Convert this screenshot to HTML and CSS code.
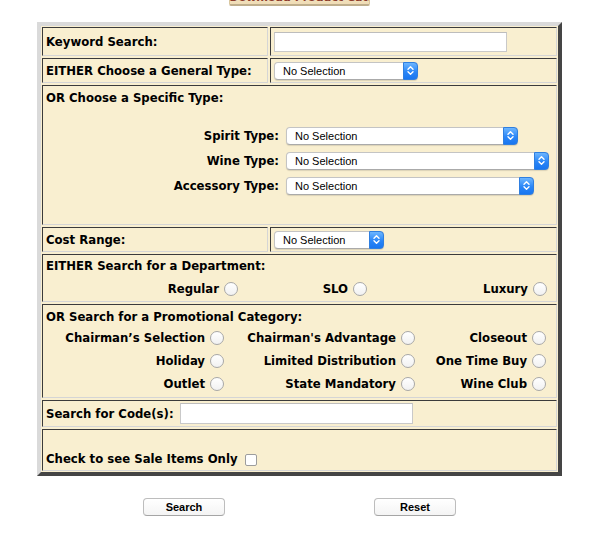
FILE: index.html
```html
<!DOCTYPE html>
<html>
<head>
<meta charset="utf-8">
<title>Product Search</title>
<link rel="stylesheet" href="styles.css">
</head>
<body>
<div class="topbar"><button class="catalog" type="button">Download Product Catalog</button></div>
<form class="search">
  <div class="grid">
    <div class="cell">Keyword Search:</div>
    <div class="cell"><input class="txt kw" type="text"></div>

    <div class="cell">EITHER Choose a General Type:</div>
    <div class="cell">
      <span class="sel w-general"><select><option>No Selection</option></select><span class="arr"><svg width="9" height="13" viewBox="0 0 9 13"><path d="M2 5.2 L4.5 2.7 L7 5.2 M2 7.8 L4.5 10.3 L7 7.8" fill="none" stroke="#fff" stroke-width="1.4" stroke-linecap="round" stroke-linejoin="round"/></svg></span></span>
    </div>

    <div class="cell span specific">
      <div class="title">OR Choose a Specific Type:</div>
      <div class="types">
        <span class="tlabel">Spirit Type:</span>
        <span class="sel w-spirit"><select><option>No Selection</option></select><span class="arr"><svg width="9" height="13" viewBox="0 0 9 13"><path d="M2 5.2 L4.5 2.7 L7 5.2 M2 7.8 L4.5 10.3 L7 7.8" fill="none" stroke="#fff" stroke-width="1.4" stroke-linecap="round" stroke-linejoin="round"/></svg></span></span>
        <span class="tlabel">Wine Type:</span>
        <span class="sel w-wine"><select><option>No Selection</option></select><span class="arr"><svg width="9" height="13" viewBox="0 0 9 13"><path d="M2 5.2 L4.5 2.7 L7 5.2 M2 7.8 L4.5 10.3 L7 7.8" fill="none" stroke="#fff" stroke-width="1.4" stroke-linecap="round" stroke-linejoin="round"/></svg></span></span>
        <span class="tlabel">Accessory Type:</span>
        <span class="sel w-accessory"><select><option>No Selection</option></select><span class="arr"><svg width="9" height="13" viewBox="0 0 9 13"><path d="M2 5.2 L4.5 2.7 L7 5.2 M2 7.8 L4.5 10.3 L7 7.8" fill="none" stroke="#fff" stroke-width="1.4" stroke-linecap="round" stroke-linejoin="round"/></svg></span></span>
      </div>
    </div>

    <div class="cell">Cost Range:</div>
    <div class="cell">
      <span class="sel w-cost"><select><option>No Selection</option></select><span class="arr"><svg width="9" height="13" viewBox="0 0 9 13"><path d="M2 5.2 L4.5 2.7 L7 5.2 M2 7.8 L4.5 10.3 L7 7.8" fill="none" stroke="#fff" stroke-width="1.4" stroke-linecap="round" stroke-linejoin="round"/></svg></span></span>
    </div>

    <div class="cell span stack dept">
      <div class="title">EITHER Search for a Department:</div>
      <div class="opts dept-opts">
        <label class="opt">Regular <input type="radio" name="dept"></label>
        <label class="opt">SLO <input type="radio" name="dept"></label>
        <label class="opt">Luxury <input type="radio" name="dept"></label>
      </div>
    </div>

    <div class="cell span stack promo">
      <div class="title">OR Search for a Promotional Category:</div>
      <div class="opts promo-opts">
        <label class="opt">Chairman’s Selection <input type="radio" name="promo"></label>
        <label class="opt">Chairman's Advantage <input type="radio" name="promo"></label>
        <label class="opt">Closeout <input type="radio" name="promo"></label>
        <label class="opt">Holiday <input type="radio" name="promo"></label>
        <label class="opt">Limited Distribution <input type="radio" name="promo"></label>
        <label class="opt">One Time Buy <input type="radio" name="promo"></label>
        <label class="opt">Outlet <input type="radio" name="promo"></label>
        <label class="opt">State Mandatory <input type="radio" name="promo"></label>
        <label class="opt">Wine Club <input type="radio" name="promo"></label>
      </div>
    </div>

    <div class="cell span">
      <span class="codelabel">Search for Code(s):</span><input class="txt code" type="text">
    </div>

    <div class="cell span bottom">
      <span class="salelabel">Check to see Sale Items Only</span><input class="chk" type="checkbox">
    </div>
  </div>
</form>
<div class="actions">
  <div class="slot"><button class="btn" type="button">Search</button></div>
  <div class="slot"><button class="btn" type="button">Reset</button></div>
</div>
</body>
</html>
```
FILE: styles.css
```css
html, body {
  margin: 0;
  padding: 0;
  background: #ffffff;
}

body {
  font-family: "DejaVu Sans Condensed", "DejaVu Sans", sans-serif;
  font-stretch: condensed;
  color: #000;
  width: 601px;
  height: 536px;
  overflow: hidden;
}

.topbar {
  display: flex;
  justify-content: center;
  height: 6px;
  padding-right: 3px;
}

.catalog {
  margin-top: -11px;
  width: 141px;
  height: 17px;
  box-sizing: border-box;
  background: linear-gradient(#f8ebcd, #efdcb5);
  border: 1px solid #d9c7a0;
  border-bottom: 2px solid #bfae8c;
  border-radius: 2px;
  color: #8c3b2c;
  font-family: "DejaVu Sans", sans-serif;
  font-size: 11px;
  font-weight: bold;
  padding: 0;
  white-space: nowrap;
  overflow: hidden;
}

.search {
  width: 525px;
  box-sizing: border-box;
  margin: 16px 0 0 37px;
  border: 4px solid;
  border-color: #dadada #454545 #454545 #dadada;
  background: #f9efd0;
  padding: 1px;
}

.grid {
  display: grid;
  grid-template-columns: 226px 287px;
  grid-template-rows: 29px 25px 140px 25px 48px 94px 27px 42px;
  gap: 2px;
}

.cell {
  box-sizing: border-box;
  border: 1px solid;
  border-color: #3b3b3b #d5d5d5 #d5d5d5 #3b3b3b;
  padding: 0 3px;
  display: flex;
  align-items: center;
  font-size: 13px;
  font-weight: bold;
  line-height: 16px;
  white-space: nowrap;
}

.span {
  grid-column: 1 / 3;
}

.title {
  height: 16px;
}

/* text inputs */
.txt {
  box-sizing: border-box;
  margin: 0;
  background: #fff;
  border: 1px solid #c9c9c9;
  border-top-color: #bdbdbd;
  padding: 0 3px;
  font-family: "Liberation Sans", sans-serif;
  font-size: 11px;
}

.kw {
  width: 233px;
  height: 20px;
}

.code {
  width: 233px;
  height: 21px;
}

/* selects */
.sel {
  position: relative;
  display: inline-flex;
  height: 18px;
}

.sel select {
  -webkit-appearance: none;
  appearance: none;
  box-sizing: border-box;
  width: 100%;
  height: 18px;
  margin: 0;
  border: 1px solid #c4c4c4;
  border-bottom-color: #aaaaaa;
  border-radius: 4px;
  background: #fff;
  box-shadow: 0 1px 1px rgba(0, 0, 0, 0.12);
  padding: 0 18px 0 8px;
  font-family: "Liberation Sans", sans-serif;
  font-size: 11px;
  color: #000;
}

.sel .arr {
  position: absolute;
  top: 0;
  right: 0;
  width: 15px;
  height: 18px;
  box-sizing: border-box;
  border-radius: 0 4px 4px 0;
  background: linear-gradient(#6db6ff, #2a86f7 55%, #1976f0);
  border: 1px solid #2f7fe0;
  display: flex;
  align-items: center;
  justify-content: center;
}

.w-general { width: 144px; }
.w-spirit { width: 232px; }
.w-wine { width: 263px; }
.w-accessory { width: 248px; }
.w-cost { width: 110px; }

/* specific type block */
.specific {
  flex-direction: column;
  align-items: stretch;
  justify-content: flex-start;
  padding-top: 4px;
}

.types {
  margin-top: 17px;
  display: grid;
  grid-template-columns: auto 263px;
  grid-auto-rows: 25px;
  column-gap: 7px;
  justify-content: end;
  align-items: center;
  padding-right: 4px;
}

.tlabel {
  justify-self: end;
}

/* radio groups */
.stack {
  flex-direction: column;
  align-items: stretch;
  justify-content: flex-start;
}

.dept {
  padding-top: 3px;
}

.promo {
  padding-top: 4px;
}

.opts {
  display: grid;
  grid-auto-rows: 23px;
}

.dept-opts {
  margin-top: 3px;
  grid-template-columns: 192px 129px 180px;
}

.promo-opts {
  margin-top: 1px;
  grid-template-columns: 178px 191px 131px;
}

.opt {
  display: flex;
  justify-content: flex-end;
  align-items: center;
  gap: 5px;
}

input[type="radio"] {
  -webkit-appearance: none;
  appearance: none;
  box-sizing: border-box;
  width: 14px;
  height: 14px;
  margin: 0;
  border: 1px solid #a8a8a8;
  border-radius: 50%;
  background: linear-gradient(#ffffff, #f1f1f1);
}

.codelabel {
  width: 134px;
}

.bottom {
  align-items: flex-end;
  padding-bottom: 3px;
}

.salelabel {
  width: 199px;
}

.chk {
  -webkit-appearance: none;
  appearance: none;
  box-sizing: border-box;
  width: 12px;
  height: 12px;
  margin: 0 0 1px 0;
  border: 1px solid #9d9d9d;
  border-radius: 2px;
  background: #fff;
}

/* bottom buttons */
.actions {
  display: flex;
  justify-content: center;
  margin-top: 22px;
  padding-right: 2px;
}

.slot {
  width: 231px;
  display: flex;
  justify-content: center;
}

.btn {
  box-sizing: border-box;
  width: 82px;
  height: 18px;
  margin: 0;
  padding: 0;
  background: linear-gradient(#ffffff, #f4f4f4);
  border: 1px solid #bdbdbd;
  border-bottom-color: #a5a5a5;
  border-radius: 4px;
  font-family: "Liberation Sans", sans-serif;
  font-size: 11px;
  font-weight: bold;
  color: #000;
}
```
